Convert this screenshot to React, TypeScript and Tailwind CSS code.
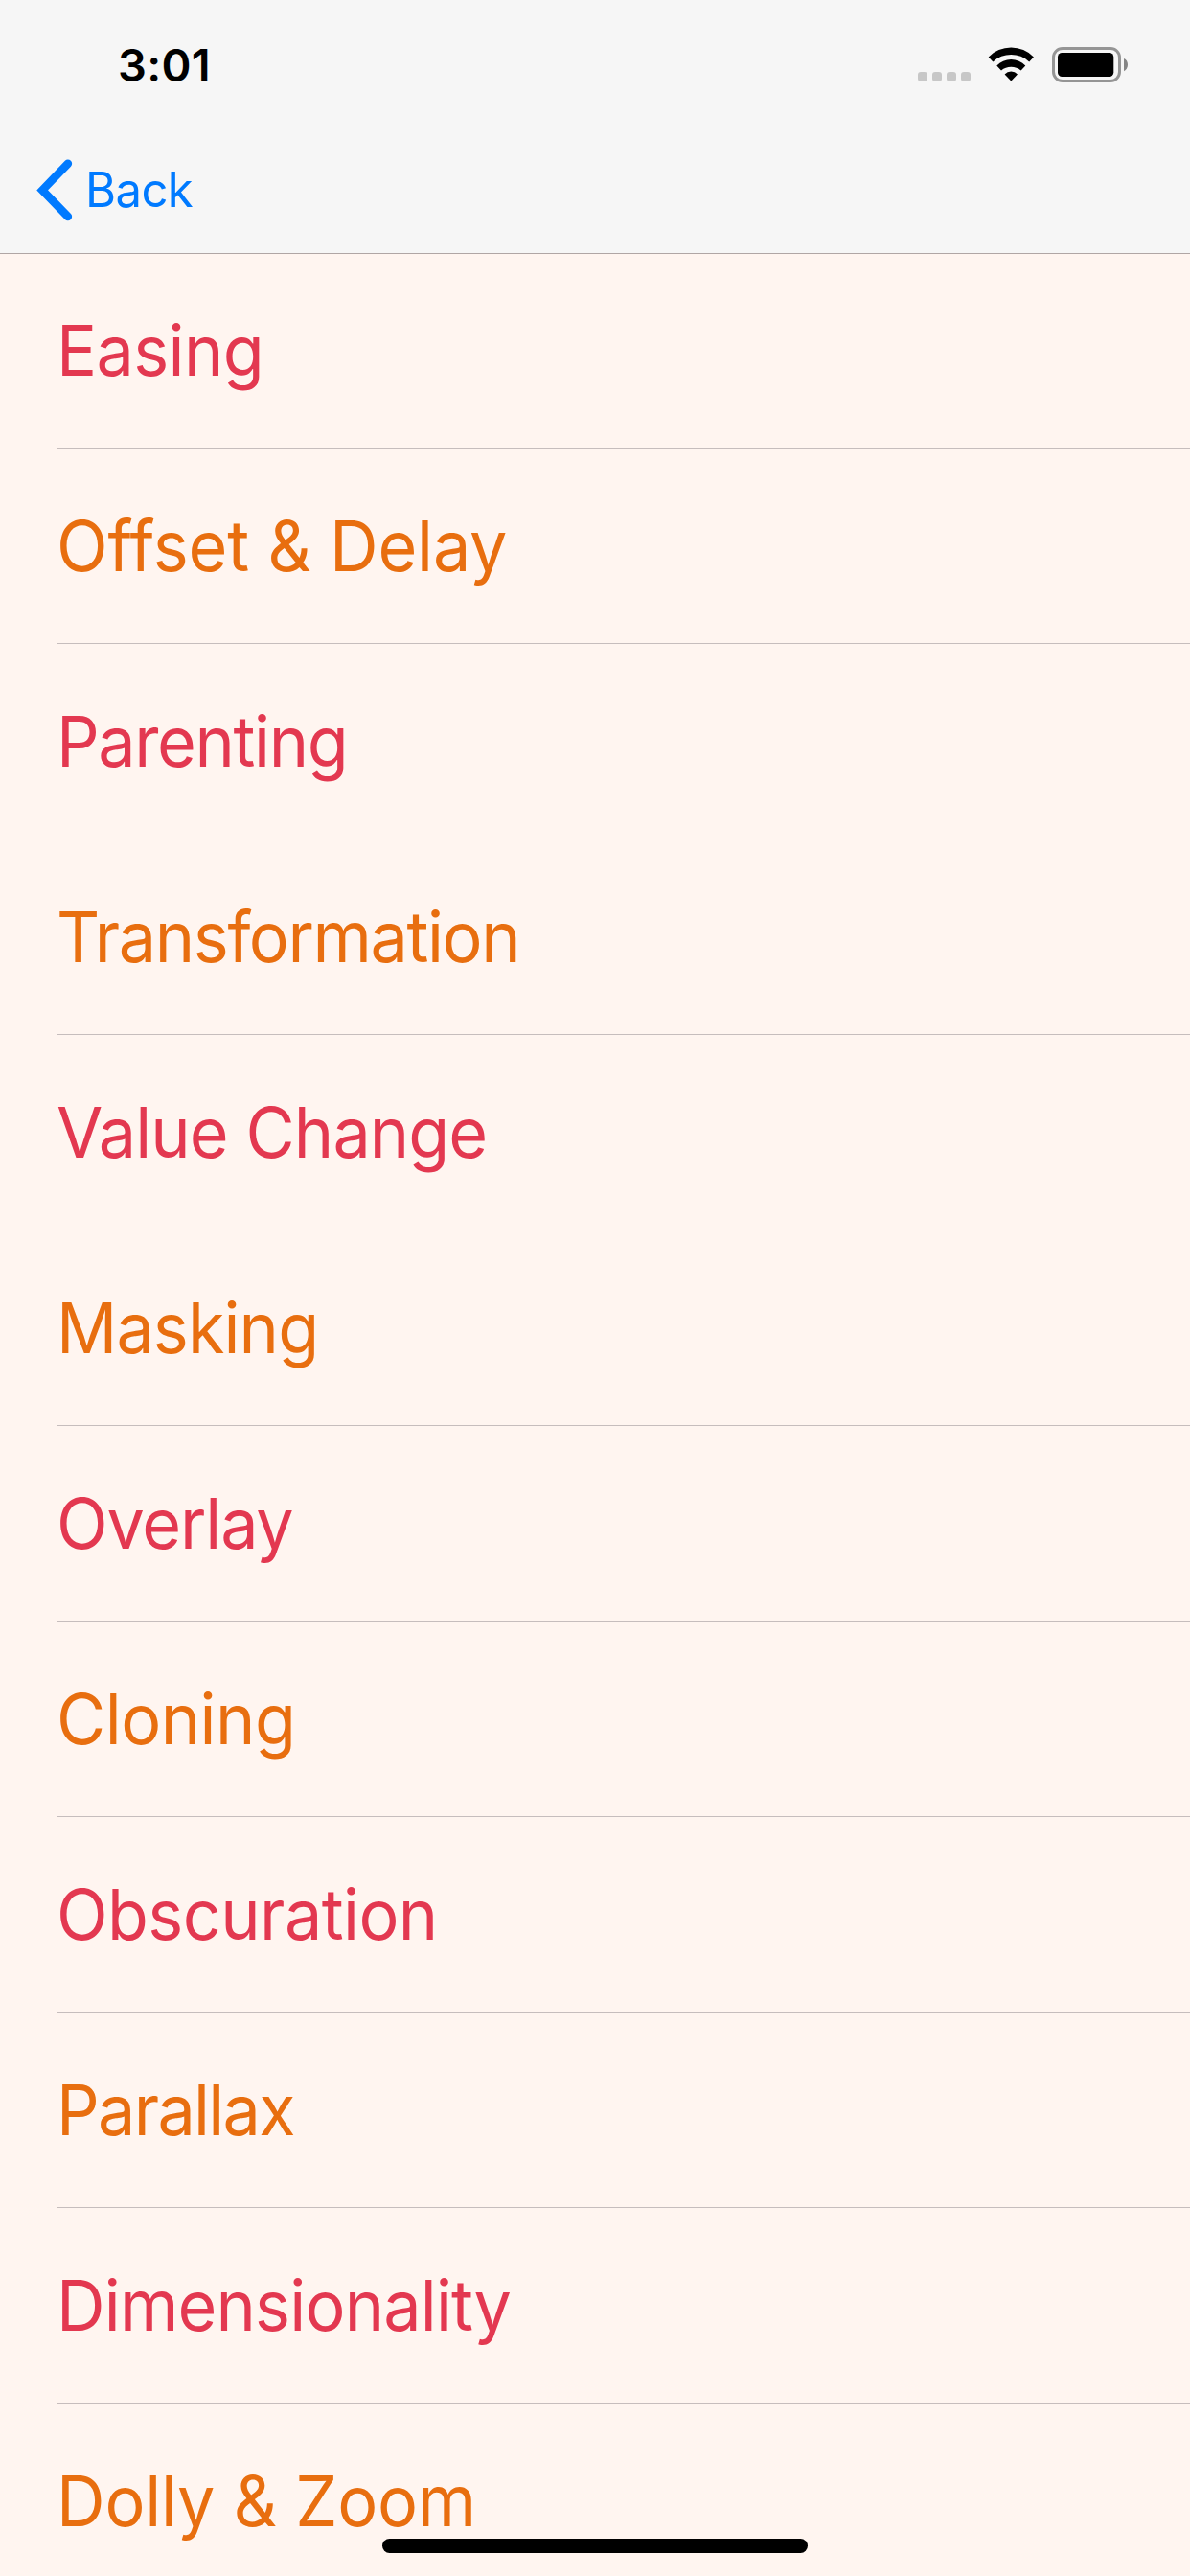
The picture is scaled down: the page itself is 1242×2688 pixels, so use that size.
const rows = [
  { label: 'Easing', style: 'text-[#e33850] tracking-[-0.66px]' },
  { label: 'Offset & Delay', style: 'text-[#e86e0f] tracking-[-0.17px]' },
  { label: 'Parenting', style: 'text-[#e33850] tracking-[-1.46px]' },
  { label: 'Transformation', style: 'text-[#e86e0f] tracking-[-1.46px]' },
  { label: 'Value Change', style: 'text-[#e33850] tracking-[-0.96px]' },
  { label: 'Masking', style: 'text-[#e86e0f] tracking-[-0.93px]' },
  { label: 'Overlay', style: 'text-[#e33850] tracking-[-1.2px]' },
  { label: 'Cloning', style: 'text-[#e86e0f] tracking-[-0.53px]' },
  { label: 'Obscuration', style: 'text-[#e33850] tracking-[-0.6px]' },
  { label: 'Parallax', style: 'text-[#e86e0f] tracking-[-1.77px]' },
  { label: 'Dimensionality', style: 'text-[#e33850] tracking-[-0.85px]' },
  { label: 'Dolly & Zoom', style: 'text-[#e86e0f] tracking-[-0.2px]' },
];

function WifiIcon() {
  return (
    <svg width="49" height="36" viewBox="0 0 49 36" fill="#000">
      <path d="M0.7 10.4A33 33 0 0 1 47.9 10.4L43.2 15.4A27.5 27.5 0 0 0 5.4 15.4Z" />
      <path d="M9.3 19.4A21 21 0 0 1 39.3 19.4L34.6 24.4A16.2 16.2 0 0 0 14 24.4Z" />
      <path d="M17.6 28.4A9.2 9.2 0 0 1 31 28.4L24.3 35.6Z" />
    </svg>
  );
}

function BatteryIcon() {
  return (
    <svg width="80" height="37" viewBox="0 0 80 37">
      <rect x="1.5" y="1.5" width="69" height="34" rx="9.5" fill="none" stroke="#959595" strokeWidth="3" />
      <rect x="6" y="6" width="58.3" height="25" rx="4.5" fill="#000" />
      <path d="M75 12C77.6 13 79 15.6 79 18.5S77.6 24 75 25.2Z" fill="#858585" />
    </svg>
  );
}

function StatusBar() {
  return (
    <div className="flex h-[132px] items-start justify-between pl-[123px] pr-[64px]">
      <span className="pt-[39px] text-[47px] font-semibold leading-[57px] tracking-[0.27px] text-black">3:01</span>
      <div className="flex items-end pt-[49px]">
        <div className="mb-px mr-[18px] flex gap-[5px]">
          <span className="size-[10px] rounded-[3px] bg-[#c7c7c7]" />
          <span className="size-[10px] rounded-[3px] bg-[#c7c7c7]" />
          <span className="size-[10px] rounded-[3px] bg-[#c7c7c7]" />
          <span className="size-[10px] rounded-[3px] bg-[#c7c7c7]" />
        </div>
        <div className="mb-px mr-[18px]">
          <WifiIcon />
        </div>
        <BatteryIcon />
      </div>
    </div>
  );
}

function NavBar() {
  return (
    <nav className="flex items-start pl-[36px]">
      <button className="flex items-start text-[#007aff]">
        <svg className="mt-[34px]" width="40" height="66" viewBox="0 0 40 66" fill="none">
          <path d="M34.9 4.8L8.2 32.4L34.9 60" stroke="currentColor" strokeWidth="8.5" strokeLinecap="round" />
        </svg>
        <span className="ml-[13px] origin-left scale-x-[0.98] pt-[36px] text-[50px] leading-[60px] tracking-[-0.6px]">Back</span>
      </button>
    </nav>
  );
}

export default function App() {
  return (
    <div className="relative h-[2688px] w-[1242px] overflow-hidden bg-[#fff5f0] font-['Inter',sans-serif]">
      <header className="relative z-10 -mb-px h-[265px] border-b border-[#b0a6a5] bg-[#f6f6f6]">
        <StatusBar />
        <NavBar />
      </header>
      <ul>
        {rows.map((row) => (
          <li key={row.label} className="ml-[60px] h-[204px] border-b border-[#c6bdbd]">
            <span className={`-ml-px block origin-left scale-x-[0.96] whitespace-nowrap text-[73px] leading-[204px] ${row.style}`}>{row.label}</span>
          </li>
        ))}
      </ul>
      <div className="absolute bottom-[24px] left-[399px] h-[15px] w-[444px] rounded-full bg-black" />
    </div>
  );
}
